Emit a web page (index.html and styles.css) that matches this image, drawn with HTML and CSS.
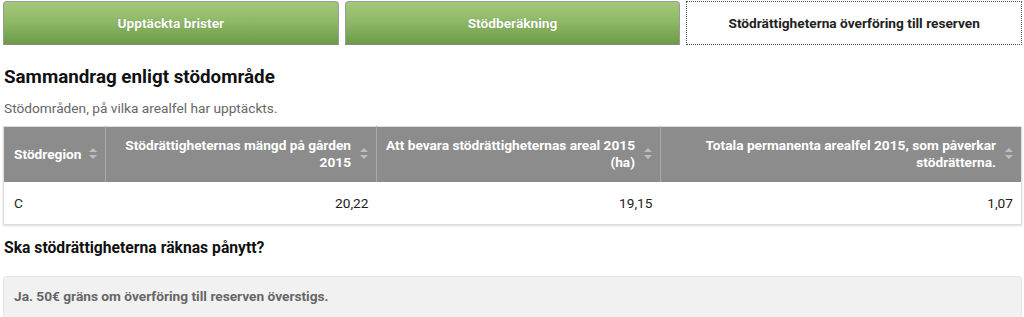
FILE: index.html
```html
<!DOCTYPE html>
<html lang="sv">
<head>
<meta charset="utf-8">
<title>Stödrättigheter</title>
<link rel="stylesheet" href="styles.css">
</head>
<body>
<div class="page">
  <nav class="tabs">
    <div class="tab">Upptäckta brister</div>
    <div class="tab">Stödberäkning</div>
    <div class="tab tab-active">Stödrättigheterna överföring till reserven</div>
  </nav>

  <h2 class="title">Sammandrag enligt stödområde</h2>
  <p class="subtitle">Stödområden, på vilka arealfel har upptäckts.</p>

  <table class="grid">
    <colgroup>
      <col class="c1"><col class="c2"><col class="c3"><col class="c4">
    </colgroup>
    <thead>
      <tr>
        <th class="left"><span class="hd">Stödregion</span><span class="sort"></span></th>
        <th><span class="hd">Stödrättigheternas mängd på gården 2015</span><span class="sort"></span></th>
        <th><span class="hd">Att bevara stödrättigheternas areal 2015 (ha)</span><span class="sort"></span></th>
        <th><span class="hd">Totala permanenta arealfel 2015, som påverkar stödrätterna.</span><span class="sort"></span></th>
      </tr>
    </thead>
    <tbody>
      <tr>
        <td class="left">C</td>
        <td>20,22</td>
        <td>19,15</td>
        <td>1,07</td>
      </tr>
    </tbody>
  </table>

  <h3 class="question">Ska stödrättigheterna räknas pånytt?</h3>
  <div class="answer">Ja. 50€ gräns om överföring till reserven överstigs.</div>
</div>
</body>
</html>
```

FILE: styles.css
```css
* { box-sizing: border-box; }
html, body { margin: 0; padding: 0; background: #fff; }
body {
  font-family: Roboto, "Liberation Sans", Arial, sans-serif;
  color: #222;
  font-size: 13.7px;
}
.page { padding: 0 2px 0 3px; overflow: hidden; height: 317px; }

.tabs {
  display: flex;
  gap: 6px;
  padding-top: 1px;
}
.tab {
  flex: 1;
  height: 44px;
  display: flex;
  align-items: center;
  justify-content: center;
  border: 1px solid #9a9a9a;
  border-bottom-color: #8a8a8a;
  border-radius: 4px 4px 0 0;
  background: linear-gradient(#a3c97b, #8cb765 50%, #6c9a47);
  color: #fff;
  font-weight: bold;
  font-size: 13.7px;
  text-shadow: 0 0 1px rgba(0,0,0,0.25);
}
.tab-active {
  background: #fff;
  color: #222;
  text-shadow: none;
  border: 1px dotted #555;
  border-radius: 0;
}

.title {
  margin: 21px 0 0 1px;
  font-size: 18.8px;
  font-weight: bold;
  line-height: 23px;
  color: #111;
}
.subtitle {
  margin: 10px 0 0 1px;
  font-size: 13.7px;
  line-height: 18px;
  color: #666;
}

.grid {
  margin-top: 9px;
  width: 100%;
  border-collapse: collapse;
  table-layout: fixed;
  border: 1px solid #ddd;
  box-shadow: 0 1px 2px rgba(0,0,0,0.15);
}
.c1 { width: 102px; }
.c2 { width: 271px; }
.c3 { width: 284px; }
.grid th {
  position: relative;
  background: #8c8c8c;
  color: #fff;
  font-weight: bold;
  font-size: 13.7px;
  line-height: 17px;
  text-align: right;
  padding: 10px 25px 10px 8px;
  height: 55px;
  border-left: 1px solid #a8a8a8;
  vertical-align: middle;
}
.grid th:first-child { border-left: none; }
.grid th.left { text-align: left; padding-left: 10px; }
.sort {
  position: absolute;
  right: 8px;
  top: 50%;
  width: 8px;
  height: 11px;
  margin-top: -6px;
}
.sort::before, .sort::after {
  content: "";
  position: absolute;
  left: 0;
  border-left: 4px solid transparent;
  border-right: 4px solid transparent;
}
.sort::before { top: 0; border-bottom: 4px solid #bdbdbd; }
.sort::after { bottom: 0; border-top: 4px solid #bdbdbd; }

.grid td {
  height: 43px;
  text-align: right;
  padding: 0 8px 0 10px;
  font-size: 13.7px;
  color: #222;
  vertical-align: middle;
}
.grid td.left { text-align: left; }

.question {
  margin: 13px 0 0 1px;
  font-size: 15.7px;
  line-height: 19px;
  font-weight: bold;
  color: #111;
}
.answer {
  margin-top: 19px;
  background: #f1f1f1;
  border: 1px solid #e6e6e6;
  border-radius: 3px;
  padding: 11px 10px;
  height: 44px;
  font-weight: bold;
  font-size: 13.7px;
  color: #666;
}
```
